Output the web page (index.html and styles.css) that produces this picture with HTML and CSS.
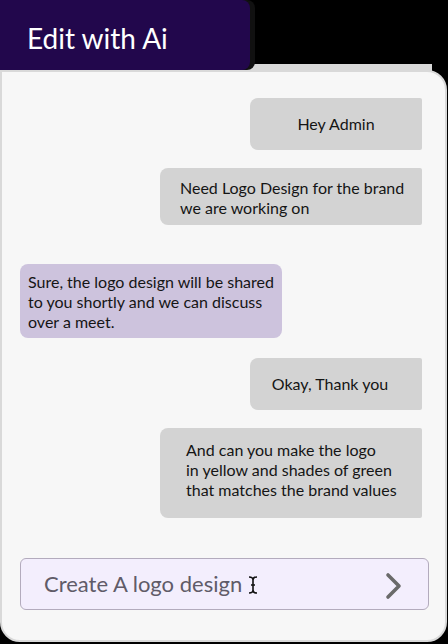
FILE: index.html
```html
<!DOCTYPE html>
<html>
<head>
<meta charset="utf-8">
<link rel="stylesheet" href="styles.css">
</head>
<body>
<div class="app">
  <div class="tab">Edit with Ai</div>
  <div class="frame">
    <div class="panel">
      <div class="messages">
        <div class="bubble out center hey">Hey Admin</div>
        <div class="bubble out need">Need Logo Design for the brand<br>we are working on</div>
        <div class="bubble in sure">Sure, the logo design will be shared<br>to you shortly and we can discuss<br>over a meet.</div>
        <div class="bubble out center okay">Okay, Thank you</div>
        <div class="bubble out andcan">And can you make the logo<br>in yellow and shades of green<br>that matches the brand values</div>
      </div>
      <div class="composer">
        <span class="placeholder">Create A logo design</span>
        <svg class="ibeam" width="10" height="20" viewBox="0 0 10 20"><path d="M1 2 Q5 2 5 5 L5 15 Q5 18 1 18 M9 2 Q5 2 5 5 M5 15 Q5 18 9 18 M3 10 L7 10" fill="none" stroke="#111" stroke-width="1.6"/></svg>
        <svg class="send" width="20" height="28" viewBox="0 0 20 28"><path d="M4 3 L15 14 L4 25" fill="none" stroke="#6a6a6a" stroke-width="3.6" stroke-linecap="round" stroke-linejoin="round"/></svg>
      </div>
    </div>
  </div>
</div>
</body>
</html>
```
FILE: styles.css
```css
html, body {
  margin: 0;
  padding: 0;
  background: #000;
  width: 448px;
  height: 644px;
  overflow: hidden;
  font-family: Lato, "Open Sans", sans-serif;
}
.app {
  display: flex;
  flex-direction: column;
  width: 448px;
  height: 644px;
}
.tab {
  position: relative;
  z-index: 1;
  box-sizing: border-box;
  width: 250px;
  height: 70px;
  background: #22074c;
  border-radius: 0 8px 8px 0;
  box-shadow: 5px 0 0 #111;
  color: #fff;
  font-size: 28px;
  display: flex;
  align-items: center;
  padding: 5px 0 0 27px;
}
.frame {
  margin-top: -6px;
  padding-top: 6px;
  background: linear-gradient(#d9d9d9, #d9d9d9) top left / 432px 8px no-repeat;
}
.panel {
  box-sizing: border-box;
  width: 447px;
  height: 572px;
  background: #f7f7f7;
  border: 2px solid #d9d9d9;
  border-radius: 0 20px 20px 20px;
  display: flex;
  flex-direction: column;
  padding: 26px 16px 30px 18px;
}
.messages {
  display: flex;
  flex-direction: column;
}
.bubble {
  box-sizing: border-box;
  font-size: 16px;
  line-height: 20px;
  color: #151515;
  background: #d3d3d3;
}
.out {
  align-self: flex-end;
  margin-right: 7px;
  border-radius: 8px 2px 2px 8px;
}
.in {
  align-self: flex-start;
  background: #cdc3dd;
  border-radius: 8px;
}
.center {
  text-align: center;
}
.hey {
  width: 172px;
  padding: 16px 0;
}
.need {
  width: 262px;
  margin-top: 18px;
  padding: 10px 4px 7px 20px;
}
.sure {
  width: 262px;
  margin-top: 39px;
  padding: 8px 2px 6px 8px;
}
.okay {
  width: 172px;
  margin-top: 20px;
  padding: 16px 12px 16px 0;
}
.andcan {
  width: 262px;
  margin-top: 18px;
  padding: 12px 4px 18px 26px;
}
.composer {
  margin-top: auto;
  box-sizing: border-box;
  height: 52px;
  background: #f3eefd;
  border: 1.5px solid #b3abbd;
  border-radius: 6px;
  display: flex;
  align-items: center;
  padding: 0 24px 0 23px;
}
.placeholder {
  font-size: 22px;
  color: #605b68;
  margin-top: -2px;
}
.ibeam {
  margin-left: 6px;
  margin-top: 2px;
}
.send {
  margin-left: auto;
  margin-top: 4px;
}
```
